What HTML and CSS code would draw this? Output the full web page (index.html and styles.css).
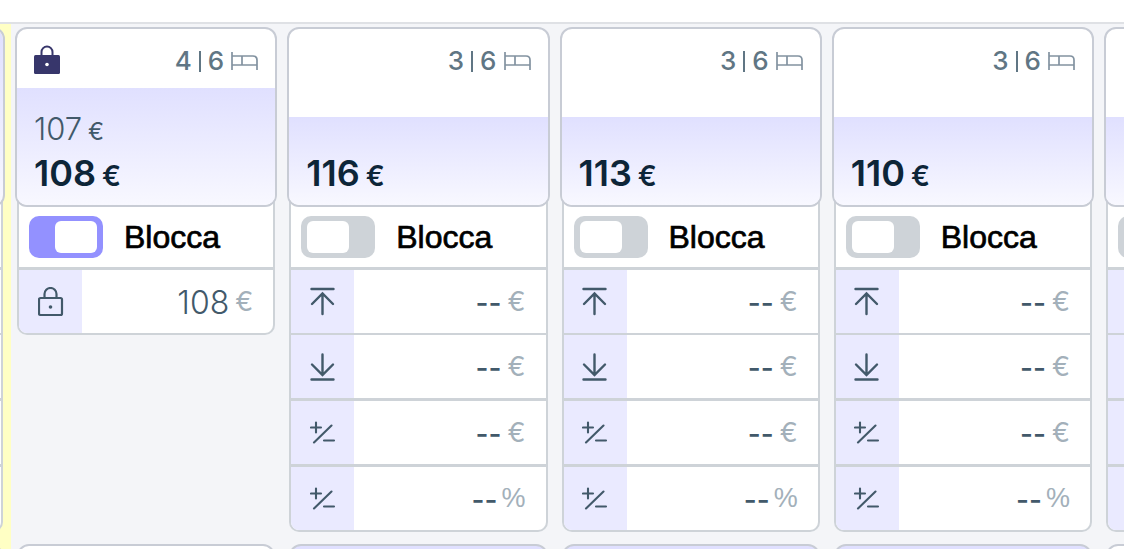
FILE: index.html
```
<!DOCTYPE html>
<html lang="it">
<head>
<meta charset="utf-8">
<title>Prezzi</title>
<link rel="stylesheet" href="styles.css">
</head>
<body>
<svg class="defs" aria-hidden="true">
  <symbol id="bed" viewBox="0 0 27 20"><path d="M1 1v18M1 5h21q4 0 4 4v10M1 14h25M11 5v9" fill="none" stroke="currentColor" stroke-width="1.7"/></symbol>
  <symbol id="lock-solid" viewBox="0 0 26 30"><path d="M7.5 11V7a5.5 5.5 0 0 1 11 0v4" fill="none" stroke="currentColor" stroke-width="2"/><rect y="10" width="26" height="19" rx="1.5" fill="currentColor"/><circle cx="13" cy="19.500" r="1.800" fill="#fff"/></symbol>
  <symbol id="lock" viewBox="0 0 26 30"><path d="M6.500 11V7a6 6 0 0 1 12 0V11" fill="none" stroke="currentColor" stroke-width="2.200"/><rect x="1" y="11" width="23" height="17" rx="1.500" fill="none" stroke="currentColor" stroke-width="2.200"/><circle cx="12.500" cy="20" r="1.800" fill="currentColor"/></symbol>
  <symbol id="max" viewBox="0 0 26 30"><path d="M1.500 2h22M12.500 27V7M2 17L12.500 6.500L23 17" fill="none" stroke="currentColor" stroke-width="2.400" stroke-linecap="round"/></symbol>
  <symbol id="min" viewBox="0 0 26 30"><path d="M1.500 27.500h22M12.500 2.500V23M2 12.500L12.500 23L23 12.500" fill="none" stroke="currentColor" stroke-width="2.400" stroke-linecap="round"/></symbol>
  <symbol id="delta" viewBox="0 0 26 30"><path d="M1 9.500h10M6 4.500v10M4 24.500L21.500 7.500M14 22.500h10" fill="none" stroke="currentColor" stroke-width="2.100" stroke-linecap="round"/></symbol>
</svg>
<header class="topbar"></header>
<main class="board">
  <section class="day day-before">
    <div class="card"><div class="price full"></div></div>
    <div class="panel"><div class="block-row"></div><div class="row"></div><div class="row"></div><div class="row"></div><div class="row"></div></div>
    <div class="next tinted"></div>
  </section>

  <section class="day">
    <div class="card">
      <div class="head"><svg class="icon"><use href="#lock-solid"/></svg><span class="beds">4<i class="bar"></i>6<svg class="bed"><use href="#bed"/></svg></span></div>
      <div class="price locked"><div class="old">107<small>€</small></div><div class="current">108<small>€</small></div></div>
    </div>
    <div class="panel">
      <label class="block-row"><input class="switch" type="checkbox" checked>Blocca</label>
      <div class="row"><span class="tag"><svg class="icon"><use href="#lock"/></svg></span><input class="value fixed" type="text" value="108" aria-label="Prezzo bloccato"><span class="unit">€</span></div>
    </div>
    <div class="next"></div>
  </section>

  <section class="day">
    <div class="card">
      <div class="head"><span class="beds">3<i class="bar"></i>6<svg class="bed"><use href="#bed"/></svg></span></div>
      <div class="price"><div class="current">116<small>€</small></div></div>
    </div>
    <div class="panel">
      <label class="block-row"><input class="switch" type="checkbox">Blocca</label>
      <div class="row"><span class="tag"><svg class="icon"><use href="#max"/></svg></span><input class="value" type="text" value="--" aria-label="Massimo"><span class="unit">€</span></div>
      <div class="row"><span class="tag"><svg class="icon"><use href="#min"/></svg></span><input class="value" type="text" value="--" aria-label="Minimo"><span class="unit">€</span></div>
      <div class="row"><span class="tag"><svg class="icon"><use href="#delta"/></svg></span><input class="value" type="text" value="--" aria-label="Variazione in euro"><span class="unit">€</span></div>
      <div class="row"><span class="tag"><svg class="icon"><use href="#delta"/></svg></span><input class="value" type="text" value="--" aria-label="Variazione percentuale"><span class="unit percent">%</span></div>
    </div>
    <div class="next tinted"></div>
  </section>

  <section class="day">
    <div class="card">
      <div class="head"><span class="beds">3<i class="bar"></i>6<svg class="bed"><use href="#bed"/></svg></span></div>
      <div class="price"><div class="current">113<small>€</small></div></div>
    </div>
    <div class="panel">
      <label class="block-row"><input class="switch" type="checkbox">Blocca</label>
      <div class="row"><span class="tag"><svg class="icon"><use href="#max"/></svg></span><input class="value" type="text" value="--" aria-label="Massimo"><span class="unit">€</span></div>
      <div class="row"><span class="tag"><svg class="icon"><use href="#min"/></svg></span><input class="value" type="text" value="--" aria-label="Minimo"><span class="unit">€</span></div>
      <div class="row"><span class="tag"><svg class="icon"><use href="#delta"/></svg></span><input class="value" type="text" value="--" aria-label="Variazione in euro"><span class="unit">€</span></div>
      <div class="row"><span class="tag"><svg class="icon"><use href="#delta"/></svg></span><input class="value" type="text" value="--" aria-label="Variazione percentuale"><span class="unit percent">%</span></div>
    </div>
    <div class="next tinted"></div>
  </section>

  <section class="day">
    <div class="card">
      <div class="head"><span class="beds">3<i class="bar"></i>6<svg class="bed"><use href="#bed"/></svg></span></div>
      <div class="price"><div class="current">110<small>€</small></div></div>
    </div>
    <div class="panel">
      <label class="block-row"><input class="switch" type="checkbox">Blocca</label>
      <div class="row"><span class="tag"><svg class="icon"><use href="#max"/></svg></span><input class="value" type="text" value="--" aria-label="Massimo"><span class="unit">€</span></div>
      <div class="row"><span class="tag"><svg class="icon"><use href="#min"/></svg></span><input class="value" type="text" value="--" aria-label="Minimo"><span class="unit">€</span></div>
      <div class="row"><span class="tag"><svg class="icon"><use href="#delta"/></svg></span><input class="value" type="text" value="--" aria-label="Variazione in euro"><span class="unit">€</span></div>
      <div class="row"><span class="tag"><svg class="icon"><use href="#delta"/></svg></span><input class="value" type="text" value="--" aria-label="Variazione percentuale"><span class="unit percent">%</span></div>
    </div>
    <div class="next tinted"></div>
  </section>

  <section class="day day-after">
    <div class="card"><div class="head"></div><div class="price"></div></div>
    <div class="panel">
      <div class="block-row"><input class="switch" type="checkbox" aria-label="Blocca"></div>
      <div class="row"><span class="tag"></span></div><div class="row"><span class="tag"></span></div><div class="row"><span class="tag"></span></div><div class="row"><span class="tag"></span></div>
    </div>
    <div class="next"></div>
  </section>
</main>
</body>
</html>
```
FILE: styles.css
```
* { box-sizing: border-box; }
body {
  margin: 0;
  height: 100vh;
  display: flex;
  flex-direction: column;
  overflow: hidden;
  background: #f4f5f8;
  font-family: Inter, "Liberation Sans", sans-serif;
  color: #42596a;
}
.defs { display: none; }
.topbar {
  flex: none;
  height: 24px;
  background: #fff;
  border-bottom: 2px solid #dfe1e5;
}
.board {
  flex: 1;
  min-height: 0;
  display: grid;
  grid-template-columns: 5px repeat(4, minmax(0, 1fr)) 20px;
  column-gap: 10px;
  overflow: hidden;
  background: linear-gradient(to right, #ffffc4 11px, #f4f5f8 11px);
}
.day {
  display: flex;
  flex-direction: column;
  padding-top: 3px;
  min-width: 0;
}
.card {
  flex: none;
  position: relative;
  z-index: 1;
  min-height: 180px;
  display: flex;
  flex-direction: column;
  border: 2px solid #c8ccd5;
  border-radius: 12px;
  background: #fff;
  overflow: hidden;
}
.head {
  flex: 1;
  display: flex;
  align-items: flex-start;
  padding: 16px 17px 0;
}
.icon { width: 26px; height: 30px; }
.head .icon { color: #37366b; }
.beds {
  margin-left: auto;
  display: flex;
  align-items: center;
  gap: 7px;
  font-size: 26px;
  line-height: 32px;
  font-weight: 500;
  color: #607684;
}
.bar { width: 2px; height: 21px; background: #607684; }
.bed { width: 27px; height: 20px; color: #8292a0; }
.price {
  min-height: 88px;
  display: flex;
  flex-direction: column;
  justify-content: flex-end;
  padding: 0 17px 8px;
  background: linear-gradient(#e0e0ff, #f8f8ff);
}
.price.locked { min-height: 117px; }
.price.full { flex: 1; }
.old, .current { display: flex; align-items: baseline; gap: 6px; }
.old { font-size: 31px; line-height: 40px; font-weight: 300; }
.current { font-size: 36px; line-height: 42px; font-weight: 600; color: #0d2538; }
.old small { font-size: 24px; font-weight: 400; }
.current small { font-size: 28px; }
.panel {
  flex: none;
  margin: -12px 2px 0;
  padding-top: 12px;
  border: 2px solid #ced3d8;
  border-top: 0;
  border-radius: 0 0 10px 10px;
  background: #fff;
  overflow: hidden;
}
.block-row {
  display: flex;
  align-items: center;
  gap: 21px;
  height: 60px;
  padding: 0 10px;
  font-family: "Liberation Sans", Arial, sans-serif;
  font-size: 32px;
  color: #000;
  -webkit-text-stroke: 0.7px #000;
}
.switch {
  appearance: none;
  flex: none;
  display: flex;
  width: 74px;
  height: 42px;
  margin: 0;
  padding: 5px 6px;
  border-radius: 10px;
  background: #ced3d8;
}
.switch::before {
  content: "";
  width: 42px;
  border-radius: 6px;
  background: #fff;
}
.switch:checked { justify-content: flex-end; background: #9391ff; }
.row {
  display: flex;
  align-items: center;
  height: 66px;
  border-top: 3px solid #ced3d8;
  padding-right: 20px;
}
.row:nth-child(3) { height: 65px; border-top-width: 2px; }
.tag {
  flex: none;
  align-self: stretch;
  width: 63px;
  display: grid;
  place-items: center;
  background: #eaeaff;
}
.value {
  flex: 1;
  width: 0;
  min-width: 0;
  border: 0;
  padding: 2px 0 0;
  background: none;
  font: 500 28px/40px Inter, "Liberation Sans", sans-serif;
  color: #42596a;
  text-align: right;
}
.value.fixed { font-size: 32px; font-weight: 300; }
.unit { margin-left: 6px; font-size: 27px; color: #a3b0ba; }
.percent { margin-left: 4px; font-family: "Liberation Sans", Arial, sans-serif; }
.next {
  flex: none;
  height: 60px;
  margin: 12px 2px 0;
  border: 2px solid #c8ccd5;
  border-radius: 12px;
  background: #fff;
}
.next.tinted { background: #e0e0ff; }
.day:nth-child(2) .next { margin-top: 209px; }
.day-before { align-items: flex-end; }
.day-before > * { width: 40px; }
.day-after > * { min-width: 240px; }
```
